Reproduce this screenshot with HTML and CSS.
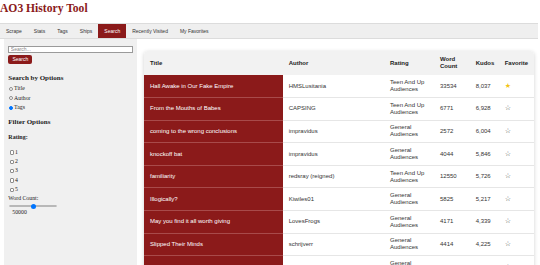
FILE: index.html
```html
<!DOCTYPE html>
<html lang="en">
<head>
    <meta charset="UTF-8">
    <meta name="viewport" content="width=device-width, initial-scale=1.0">
    <title>AO3 History Tool</title>
    <link rel="stylesheet" href="styles.css">
</head>
<body>

<h1 class="site-title">AO3 History Tool</h1>

<nav class="tabs">
    <a class="tab">Scrape</a>
    <a class="tab">Stats</a>
    <a class="tab">Tags</a>
    <a class="tab">Ships</a>
    <a class="tab active">Search</a>
    <a class="tab">Recently Visited</a>
    <a class="tab">My Favorites</a>
</nav>

<div class="layout">
    <aside class="sidebar">
        <input type="text" class="search-input" placeholder="Search...">
        <button class="search-btn">Search</button>

        <h3 class="side-heading">Search by Options</h3>
        <label class="option"><input type="radio" name="by"> Title</label>
        <label class="option"><input type="radio" name="by"> Author</label>
        <label class="option"><input type="radio" name="by" checked> Tags</label>

        <h3 class="side-heading filter-heading">Filter Options</h3>
        <h4 class="side-sub">Rating:</h4>
        <label class="check"><input type="checkbox"> 1</label>
        <label class="check"><input type="checkbox"> 2</label>
        <label class="check"><input type="checkbox"> 3</label>
        <label class="check"><input type="checkbox"> 4</label>
        <label class="check"><input type="checkbox"> 5</label>

        <div class="wc-label">Word Count:</div>
        <input type="range" class="wc-range" min="0" max="100000" value="50000">
        <div class="wc-value">50000</div>
    </aside>

    <main class="main">
        <div class="results-card">
            <table class="results">
                <colgroup>
                    <col class="c-title">
                    <col class="c-author">
                    <col class="c-rating">
                    <col class="c-words">
                    <col class="c-kudos">
                    <col class="c-fav">
                </colgroup>
                <thead>
                    <tr>
                        <th>Title</th>
                        <th>Author</th>
                        <th>Rating</th>
                        <th>Word Count</th>
                        <th>Kudos</th>
                        <th>Favorite</th>
                    </tr>
                </thead>
                <tbody>
                    <tr>
                        <td class="work-title">Hall Awake in Our Fake Empire</td>
                        <td>HMSLusitania</td>
                        <td>Teen And Up Audiences</td>
                        <td>33534</td>
                        <td>8,037</td>
                        <td><span class="star on">★</span></td>
                    </tr>
                    <tr>
                        <td class="work-title">From the Mouths of Babes</td>
                        <td>CAPSING</td>
                        <td>Teen And Up Audiences</td>
                        <td>6771</td>
                        <td>6,928</td>
                        <td><span class="star">☆</span></td>
                    </tr>
                    <tr>
                        <td class="work-title">coming to the wrong conclusions</td>
                        <td>impravidus</td>
                        <td>General Audiences</td>
                        <td>2572</td>
                        <td>6,004</td>
                        <td><span class="star">☆</span></td>
                    </tr>
                    <tr>
                        <td class="work-title">knockoff bat</td>
                        <td>impravidus</td>
                        <td>General Audiences</td>
                        <td>4044</td>
                        <td>5,846</td>
                        <td><span class="star">☆</span></td>
                    </tr>
                    <tr>
                        <td class="work-title">familiarity</td>
                        <td>redsray (reigned)</td>
                        <td>Teen And Up Audiences</td>
                        <td>12550</td>
                        <td>5,726</td>
                        <td><span class="star">☆</span></td>
                    </tr>
                    <tr>
                        <td class="work-title">Illogically?</td>
                        <td>Kiwiles01</td>
                        <td>General Audiences</td>
                        <td>5825</td>
                        <td>5,217</td>
                        <td><span class="star">☆</span></td>
                    </tr>
                    <tr>
                        <td class="work-title">May you find it all worth giving</td>
                        <td>LovesFrogs</td>
                        <td>General Audiences</td>
                        <td>4171</td>
                        <td>4,339</td>
                        <td><span class="star">☆</span></td>
                    </tr>
                    <tr>
                        <td class="work-title">Slipped Their Minds</td>
                        <td>schrijverr</td>
                        <td>General Audiences</td>
                        <td>4414</td>
                        <td>4,225</td>
                        <td><span class="star">☆</span></td>
                    </tr>
                    <tr>
                        <td class="work-title">Ever After</td>
                        <td>impravidus</td>
                        <td>General Audiences</td>
                        <td>3980</td>
                        <td>4,102</td>
                        <td><span class="star">☆</span></td>
                    </tr>
                </tbody>
            </table>
        </div>
    </main>
</div>

</body>
</html>
```

FILE: styles.css
```css
html, body {
    overflow: hidden;
}
body {
    margin: 0;
    height: 100vh;
    display: flex;
    flex-direction: column;
    font-family: 'Liberation Serif', 'Times New Roman', serif;
    color: #222;
    background-color: #fff;
}
.site-title {
    margin: 2px 0 7px 0;
    font-size: 11.6px;
    line-height: 14px;
    color: #8b1a1a;
}
.tabs {
    display: flex;
    height: 14px;
    margin-right: 2px;
    border-top: 1px solid #dcdcdc;
    border-bottom: 1px solid #dcdcdc;
    background-color: #efefef;
    font-family: 'Liberation Sans', Arial, sans-serif;
    font-size: 5px;
}
.tab {
    padding: 0 6px;
    line-height: 14px;
    color: #333;
    cursor: pointer;
}
.tab.active {
    background-color: #8b1a1a;
    color: #fff;
}
.layout {
    flex: 1;
    display: flex;
    min-height: 0;
}
.sidebar {
    width: 133px;
    margin-left: 4px;
    padding: 6.7px 3.7px 0 4.3px;
    box-sizing: border-box;
    background-color: #f0f0f0;
    font-size: 5.8px;
}
.search-input {
    display: block;
    width: 125px;
    height: 7px;
    box-sizing: border-box;
    margin: 0;
    padding: 0 1.5px;
    border: 1px solid #9a9a9a;
    background-color: #fff;
    font-family: 'Liberation Sans', Arial, sans-serif;
    font-size: 5px;
    outline: none;
}
.search-input::placeholder {
    color: #8a8a8a;
}
.search-btn {
    display: block;
    margin-top: 2px;
    width: 24px;
    height: 9.3px;
    padding: 0;
    border: none;
    border-radius: 2px;
    background-color: #8b1a1a;
    color: #fff;
    font-family: 'Liberation Sans', Arial, sans-serif;
    font-size: 5px;
    cursor: pointer;
}
.side-heading {
    margin: 9.7px 0 0 0;
    font-size: 7px;
    line-height: 8px;
}
.filter-heading {
    margin-top: 5.5px;
}
.side-sub {
    margin: 8.2px 0 6.5px 0;
    font-size: 6px;
    line-height: 7px;
}
.option, .check {
    display: flex;
    align-items: center;
    line-height: 9.5px;
    height: 9.5px;
}
.side-heading + .option {
    margin-top: 2.5px;
}
.check {
    height: 9.33px;
}
.option input {
    appearance: none;
    width: 4px;
    height: 4px;
    margin: 0 0.8px 0 1px;
    border: 1px solid #8d8d8d;
    border-radius: 50%;
    background-color: #fff;
    box-sizing: border-box;
}
.option input:checked {
    border-color: #0075ff;
    background-color: #0075ff;
}
.check input {
    appearance: none;
    width: 4.5px;
    height: 4.5px;
    margin: 0 0.6px 0 1.7px;
    border: 1px solid #8d8d8d;
    border-radius: 1px;
    background-color: #fff;
    box-sizing: border-box;
}
.wc-label {
    margin-top: 0.8px;
    line-height: 7px;
}
.wc-range {
    -webkit-appearance: none;
    appearance: none;
    display: block;
    width: 48px;
    height: 5px;
    margin: 1.3px 0 0 1px;
    background: transparent;
}
.wc-range::-webkit-slider-runnable-track {
    height: 2.4px;
    border-radius: 2px;
    border: 0.5px solid #b8b8b8;
    background: linear-gradient(to right, #0075ff 50%, #efefef 50%);
}
.wc-range::-webkit-slider-thumb {
    -webkit-appearance: none;
    width: 5px;
    height: 5px;
    margin-top: -1.8px;
    border-radius: 50%;
    background-color: #0075ff;
}
.wc-value {
    padding-left: 4px;
    line-height: 7px;
}
.main {
    flex: 1;
    padding: 12px 6px 0 7px;
    overflow: hidden;
}
.results-card {
    width: 390px;
    border-radius: 4px;
    background-color: #fff;
    box-shadow: 0 1px 4px rgba(0, 0, 0, 0.18);
    overflow: hidden;
}
.results {
    width: 390px;
    table-layout: fixed;
    border-collapse: collapse;
    font-family: 'Liberation Sans', Arial, sans-serif;
    font-size: 6px;
    line-height: 7px;
    color: #333;
}
.c-title { width: 138.7px; }
.c-author { width: 101.3px; }
.c-rating { width: 50px; }
.c-words { width: 35.7px; }
.c-kudos { width: 29px; }
.c-fav { width: 35.3px; }
.results th {
    height: 24px;
    padding: 0 6px;
    background-color: #f2f2f2;
    text-align: left;
    font-weight: bold;
    color: #222;
    white-space: normal;
}
.results th:last-child {
    padding-right: 0;
}
.results td {
    height: 22.6px;
    padding: 0 6px;
    box-sizing: border-box;
    border-bottom: 1px solid #e6e6e6;
    vertical-align: middle;
}
.results td.work-title {
    background-color: #8b1a1a;
    color: #fff;
    border-bottom: 1px solid #a84a4a;
}
.star {
    font-family: 'DejaVu Sans', sans-serif;
    font-size: 7px;
    color: #444;
}
.star.on {
    color: #f2c314;
}
```
